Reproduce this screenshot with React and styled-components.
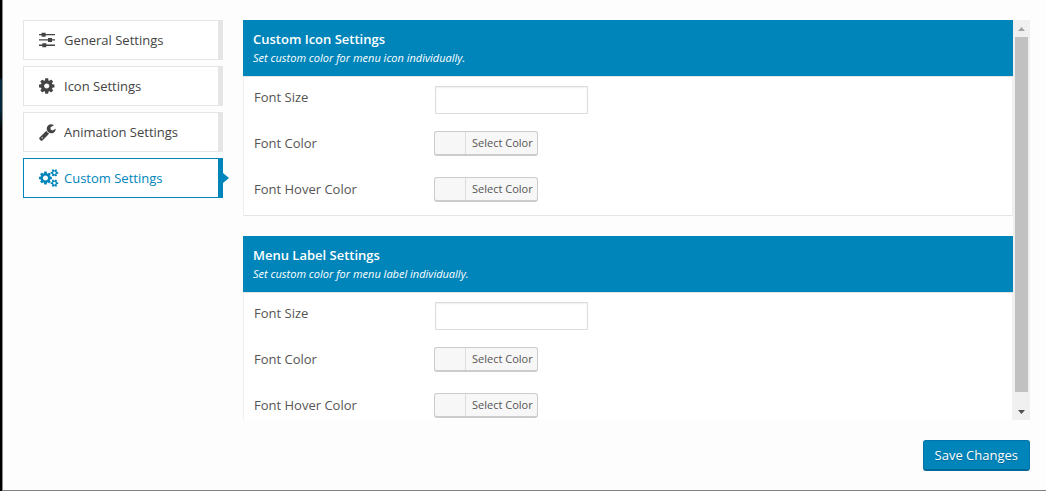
import React, { useState } from 'react';
import styled, { createGlobalStyle, css } from 'styled-components';

const tabs = [
  { id: 'general', label: 'General Settings' },
  { id: 'icon', label: 'Icon Settings' },
  { id: 'animation', label: 'Animation Settings' },
  { id: 'custom', label: 'Custom Settings' },
];

const sections = [
  {
    id: 'icon',
    title: 'Custom Icon Settings',
    description: 'Set custom color for menu icon individually.',
  },
  {
    id: 'label',
    title: 'Menu Label Settings',
    description: 'Set custom color for menu label individually.',
  },
];

const fields = [
  { id: 'size', type: 'text', label: 'Font Size' },
  { id: 'color', type: 'color', label: 'Font Color' },
  { id: 'hover', type: 'color', label: 'Font Hover Color' },
];

const smallCog =
  'v140q0 16-149 31-12 27-30 52 51 113 51 138 0 4-4 7-122 71-124 71-8 0-46-47t-52-68q-20 2-30 2t-30-2q-14 21-52 68t-46 47q-2 0-124-71-4-3-4-7 0-25 51-138-18-25-30-52-149-15-149-31v-140q0-16 149-31 13-29 30-52-51-113-51-138 0-4 4-7 4-2 35-20t59-34 30-16q8 0 46 46.500t52 67.500q20-2 30-2t30 2q51-71 92-112l6-2q4 0 124 70 4 3 4 7 0 25-51 138 17 23 30 52 149 15 149 31z';

function TabIcon({ id }) {
  if (id === 'general')
    return (
      <svg width="16" height="16" viewBox="0 0 16 16" aria-hidden="true">
        <path d="M0 2h16v1.300H0zM0 7.300h16v1.300H0zM0 12.600h16v1.300H0z" />
        <path d="M2.600.700h4v4h-4zM9 6h4v4H9zM3.300 11.200h4v4h-4z" />
      </svg>
    );
  if (id === 'icon')
    return (
      <svg width="18" height="18" viewBox="128 0 1792 1792" aria-hidden="true">
        <path d="M1152 896q0-106-75-181t-181-75-181 75-75 181 75 181 181 75 181-75 75-181zm512-109v222q0 12-8 23t-20 13l-185 28q-19 54-39 91 35 50 107 138 10 12 10 25t-9 23q-27 37-99 108t-94 71q-12 0-26-9l-138-108q-44 23-91 38-16 136-29 186-7 28-36 28h-222q-14 0-24.500-8.500t-11.500-21.500l-28-184q-49-16-90-37l-141 107q-10 9-25 9-14 0-25-11-126-114-165-168-7-10-7-23 0-12 8-23 15-21 51-66.500t54-70.500q-27-50-41-99l-183-27q-13-2-21-12.500t-8-23.500v-222q0-12 8-23t19-13l186-28q14-46 39-92-40-57-107-138-10-12-10-24 0-10 9-23 26-36 98.500-107.500t94.500-71.500q13 0 26 10l138 107q44-23 91-38 16-136 29-186 7-28 36-28h222q14 0 24.500 8.500t11.500 21.500l28 184q49 16 90 37l142-107q9-9 24-9 13 0 25 10 129 119 165 170 7 8 7 22 0 12-8 23-15 21-51 66.500t-54 70.500q26 50 41 98l183 28q13 2 21 12.500t8 23.500z" />
      </svg>
    );
  if (id === 'animation')
    return (
      <svg width="18" height="18" viewBox="64 0 1792 1792" aria-hidden="true">
        <path d="M448 1472q0-26-19-45t-45-19-45 19-19 45 19 45 45 19 45-19 19-45zm644-420l-682 682q-37 37-90 37-52 0-91-37l-106-108q-38-36-38-90 0-53 38-91l681-681q39 98 114.500 173.500t173.500 114.500zm634-435q0 39-23 106-47 134-164.500 217.500t-258.500 83.500q-185 0-316.500-131.500t-131.500-316.500 131.500-316.500 316.500-131.500q58 0 121.500 16.500t107.500 46.500q16 11 16 28t-16 28l-293 169v224l193 107q5-3 79-48.500t135.500-81 70.500-35.500q15 0 23.500 10t8.500 25z" />
      </svg>
    );
  return (
    <svg width="20" height="18" viewBox="0 0 1991 1792" aria-hidden="true">
      <path d="M896 896q0-106-75-181t-181-75-181 75-75 181 75 181 181 75 181-75 75-181zM1280 805v185q0 10-7 19.500t-16 10.500l-155 24q-11 35-32 76 34 48 90 115 7 11 7 20 0 12-7 19-23 30-82.500 89.500t-78.500 59.500q-11 0-21-7l-115-90q-37 19-77 31-11 108-23 155-7 24-30 24h-186q-11 0-20-7.500t-10-17.500l-23-153q-34-10-75-31l-118 89q-7 7-20 7-11 0-21-8-144-133-144-160 0-9 7-19 10-14 41-53t47-61q-23-44-35-82l-152-24q-10-1-17-9.500t-7-19.500v-185q0-10 7-19.500t16-10.500l155-24q11-35 32-76-34-48-90-115-7-11-7-20 0-12 7-20 22-30 82-89t79-59q11 0 21 7l115 90q34-18 77-32 11-108 23-154 7-24 30-24h186q11 0 20 7.500t10 17.500l23 153q34 10 75 31l118-89q8-7 20-7 11 0 21 8 144 133 144 160 0 8-7 19-12 16-42 54t-45 60q23 48 34 82l152 23q10 2 17 10.500t7 19.500z" fillRule="evenodd" />
      <path
        d={`M1920 1338${smallCog}M1664 1408a128 128 0 1 0-256 0 128 128 0 1 0 256 0z`}
        fillRule="evenodd"
      />
      <path
        d={`M1920 314${smallCog}M1664 384a128 128 0 1 0-256 0 128 128 0 1 0 256 0z`}
        fillRule="evenodd"
      />
    </svg>
  );
}

function Field({ sectionId, data }) {
  const [value, setValue] = useState('');
  const id = `${sectionId}-${data.id}`;

  return (
    <Row>
      <label htmlFor={id}>{data.label}</label>
      {data.type === 'text' ? (
        <TextInput
          id={id}
          type="text"
          value={value}
          onChange={(e) => setValue(e.target.value)}
        />
      ) : (
        <ColorButton id={id} type="button">
          <span>Select Color</span>
        </ColorButton>
      )}
    </Row>
  );
}

export default function App() {
  const [current, setCurrent] = useState('custom');

  return (
    <>
      <GlobalStyle />
      <Page>
        <Backdrop />
        <Content>
          <Columns>
            <Sidebar>
              {tabs.map((tab) => (
                <Tab
                  key={tab.id}
                  type="button"
                  $active={tab.id === current}
                  onClick={() => setCurrent(tab.id)}
                >
                  <IconBox>
                    <TabIcon id={tab.id} />
                  </IconBox>
                  {tab.label}
                </Tab>
              ))}
            </Sidebar>
            <Pane>
              <Sections>
                {sections.map((section) => (
                  <Section key={section.id}>
                    <SectionHeader>
                      <h2>{section.title}</h2>
                      <p>{section.description}</p>
                    </SectionHeader>
                    <SectionBody>
                      {fields.map((el) => (
                        <Field key={el.id} sectionId={section.id} data={el} />
                      ))}
                    </SectionBody>
                  </Section>
                ))}
              </Sections>
              <Scrollbar aria-hidden="true">
                <Arrow>
                  <svg width="7" height="4" viewBox="0 0 7 4">
                    <path d="M3.500 0L7 4H0z" fill="#a3a3a3" />
                  </svg>
                </Arrow>
                <Track>
                  <Thumb />
                </Track>
                <Arrow>
                  <svg width="7" height="4" viewBox="0 0 7 4">
                    <path d="M0 0h7L3.500 4z" fill="#505050" />
                  </svg>
                </Arrow>
              </Scrollbar>
            </Pane>
          </Columns>
          <Footer>
            <SaveButton type="submit">Save Changes</SaveButton>
          </Footer>
        </Content>
      </Page>
    </>
  );
}

const GlobalStyle = createGlobalStyle`
  * {
    box-sizing: border-box;
  }
  body {
    margin: 0;
    background-color: #fdfdfd;
    color: #555;
    font-family: 'Open Sans', 'Noto Sans', sans-serif;
    font-size: 13px;
  }
  button,
  input {
    font-family: inherit;
  }
  h2,
  p {
    margin: 0;
  }
`;

const Page = styled.div`
  display: flex;
  height: 100vh;
`;

const Backdrop = styled.div`
  flex: none;
  width: 3px;
  border-right: 1px solid #8c8c8c;
  background: linear-gradient(#000 78px, #00283c 80px, #00283c 110px, #000 130px);
`;

const Content = styled.form`
  flex: 1;
  min-width: 0;
  display: flex;
  flex-direction: column;
  gap: 20px;
  padding: 20px 16px 19px 20px;
  border-bottom: 1px solid #808080;
`;

const Columns = styled.div`
  flex: 1;
  min-height: 0;
  display: flex;
  gap: 20px;
`;

const Sidebar = styled.nav`
  flex: none;
  width: 200px;
  display: flex;
  flex-direction: column;
  gap: 6px;
`;

const Tab = styled.button`
  position: relative;
  display: flex;
  align-items: center;
  height: 40px;
  padding: 0 0 0 15px;
  border: 1px solid #e5e5e5;
  border-right-width: 5px;
  background-color: #fff;
  color: #444;
  font-size: 13px;
  text-align: left;
  cursor: pointer;

  svg {
    display: block;
    fill: currentColor;
  }

  ${({ $active }) =>
    $active &&
    css`
      border-color: #0085ba;
      color: #0085ba;

      &::after {
        content: '';
        position: absolute;
        top: 14px;
        right: -11px;
        border: 5px solid transparent;
        border-left: 6px solid #0085ba;
        border-right: 0;
      }
    `}
`;

const IconBox = styled.span`
  width: 25px;
`;

const Pane = styled.div`
  flex: 1;
  min-width: 0;
  display: flex;
  overflow: hidden;
`;

const Sections = styled.div`
  flex: 1;
  min-width: 0;
  display: flex;
  flex-direction: column;
  gap: 20px;
  overflow: hidden;
`;

const Section = styled.section`
  flex: none;
`;

const SectionHeader = styled.header`
  padding: 9px 10px;
  background-color: #0085ba;
  color: #fff;

  h2 {
    font-size: 13px;
    font-weight: 600;
    line-height: 20px;
  }
  p {
    font-size: 11px;
    font-style: italic;
    font-weight: 500;
    line-height: 18px;
  }
`;

const SectionBody = styled.div`
  border: 1px solid #e5e5e5;
  border-left-color: #f0f0f0;
  border-right-color: #f0f0f0;
  background-color: #fff;
`;

const Row = styled.div`
  display: flex;
  align-items: flex-start;
  height: 46px;
  padding: 8px 10px;

  label {
    width: 180px;
    font-size: 13px;
    line-height: 24px;
  }
`;

const TextInput = styled.input`
  width: 153px;
  height: 28px;
  margin: 1px;
  padding: 3px 5px;
  border: 1px solid #ddd;
  background-color: #fff;
  box-shadow: inset 0 1px 2px rgba(0, 0, 0, 0.07);
  color: #32373c;
  font-size: 13px;
`;

const ColorButton = styled.button`
  height: 25px;
  padding: 0 0 0 30px;
  border: 1px solid #ccc;
  border-bottom-width: 2px;
  border-radius: 3px;
  background-color: #f7f7f7;
  color: #555;
  font-size: 11px;
  cursor: pointer;

  span {
    display: block;
    padding: 0 4px 0 6px;
    border-left: 1px solid #ddd;
    line-height: 22px;
  }
`;

const Scrollbar = styled.div`
  flex: none;
  width: 17px;
  display: flex;
  flex-direction: column;
  background-color: #f0f0f0;
`;

const Arrow = styled.div`
  height: 17px;
  display: flex;
  align-items: center;
  justify-content: center;
`;

const Track = styled.div`
  flex: 1;
  padding: 0 2px;
`;

const Thumb = styled.div`
  height: 97%;
  background-color: #c1c1c1;
`;

const Footer = styled.footer`
  display: flex;
  justify-content: flex-end;
`;

const SaveButton = styled.button`
  height: 31px;
  padding: 0 11px;
  border: 1px solid #0073aa;
  border-bottom: 2px solid #006799;
  border-radius: 3px;
  background-color: #0085ba;
  color: #fff;
  font-size: 13px;
  text-shadow: 0 1px 1px #006799;
  cursor: pointer;
`;
